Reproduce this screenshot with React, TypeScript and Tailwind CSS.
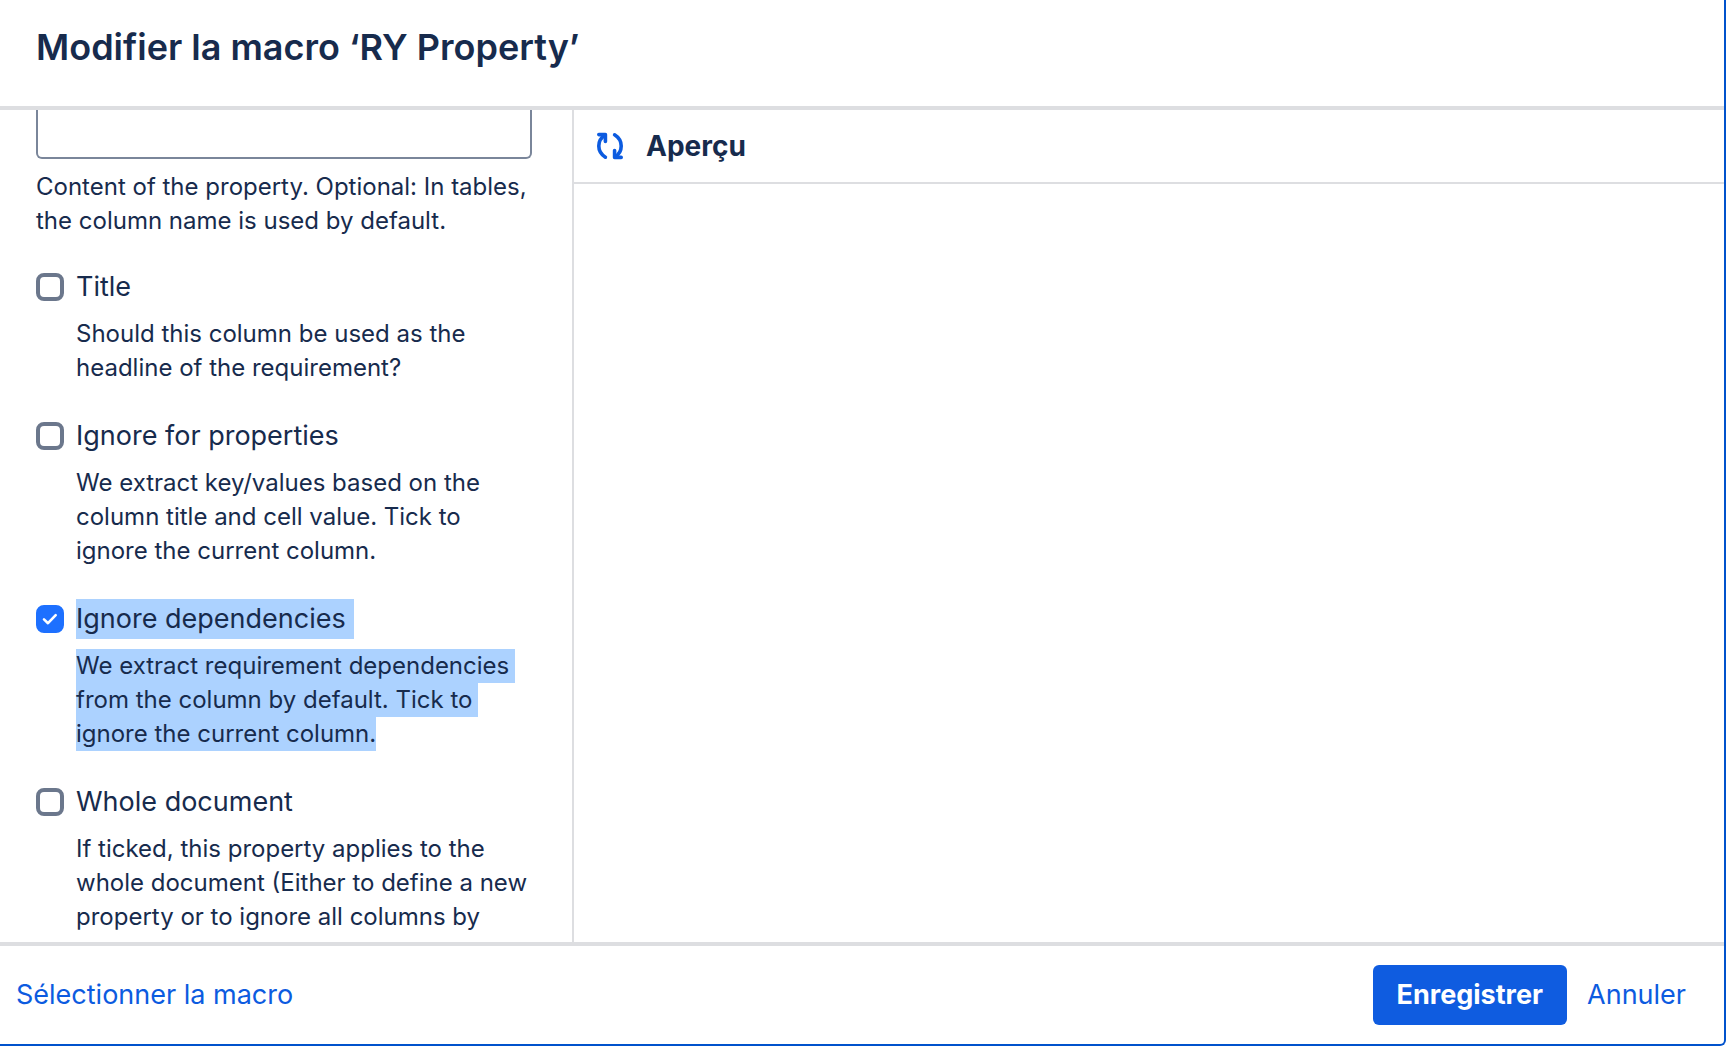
import React from "react";

type Option = {
  id: string;
  label: string;
  lines: string[];
  checked?: boolean;
  selected?: boolean;
};

const options: Option[] = [
  {
    id: "title",
    label: "Title",
    lines: ["Should this column be used as the", "headline of the requirement?"],
  },
  {
    id: "ignore-properties",
    label: "Ignore for properties",
    lines: [
      "We extract key/values based on the",
      "column title and cell value. Tick to",
      "ignore the current column.",
    ],
  },
  {
    id: "ignore-dependencies",
    label: "Ignore dependencies",
    lines: [
      "We extract requirement dependencies",
      "from the column by default. Tick to",
      "ignore the current column.",
    ],
    checked: true,
    selected: true,
  },
  {
    id: "whole-document",
    label: "Whole document",
    lines: [
      "If ticked, this property applies to the",
      "whole document (Either to define a new",
      "property or to ignore all columns by",
    ],
  },
];

function RefreshIcon() {
  return (
    <svg
      viewBox="0 0 28 28"
      className="h-7 w-7"
      fill="none"
      stroke="currentColor"
      strokeWidth="3.6"
      strokeLinecap="round"
      strokeLinejoin="round"
      aria-hidden="true"
    >
      <path d="M9.4 25.2C5 22.4 2.8 18.4 2.8 14C2.8 9.6 5 5.6 9 3" />
      <path d="M2.8 2.6H9.4V9.4" />
      <path d="M18.6 2.8C23 5.6 25.2 9.6 25.2 14C25.2 18.4 23 22.4 19 25" />
      <path d="M25.2 25.4H18.6V18.6" />
    </svg>
  );
}

function OptionField({ option }: { option: Option }) {
  return (
    <div className="flex gap-3">
      <div className="relative mt-[6px] h-7 w-7 shrink-0">
        <input
          id={option.id}
          type="checkbox"
          defaultChecked={option.checked}
          aria-describedby={option.id + "-help"}
          className="peer block h-7 w-7 appearance-none rounded-lg border-4 border-[#6b778c] bg-white checked:border-[#1d70ff] checked:bg-[#1d70ff]"
        />
        <svg
          viewBox="0 0 28 28"
          className="pointer-events-none absolute inset-0 hidden h-7 w-7 peer-checked:block"
          fill="none"
          stroke="white"
          strokeWidth="2.6"
          strokeLinecap="round"
          strokeLinejoin="round"
          aria-hidden="true"
        >
          <path d="M8 14.4L12 18.2L19.7 10.2" />
        </svg>
      </div>
      <div className="min-w-0 whitespace-nowrap">
        <label
          htmlFor={option.id}
          className={
            option.selected
              ? "block w-fit bg-[#acd2ff] pr-2 text-[27px] leading-10"
              : "block w-fit text-[27px] leading-10"
          }
        >
          {option.label}
        </label>
        <p id={option.id + "-help"} className="mt-[10px] text-[24px] leading-[34px]">
          {option.lines.map((line, i) => (
            <span
              key={line}
              className={
                option.selected
                  ? i < option.lines.length - 1
                    ? "block w-fit bg-[#acd2ff] pr-[6px]"
                    : "block w-fit bg-[#acd2ff]"
                  : "block w-fit"
              }
            >
              {line}
            </span>
          ))}
        </p>
      </div>
    </div>
  );
}

export default function App() {
  return (
    <div className="flex h-screen flex-col overflow-hidden rounded-br-md border-r-2 border-b-2 border-[#0052cc] bg-white font-['Inter',sans-serif] text-[#172b4d]">
      <header className="h-[110px] shrink-0 border-b-4 border-[#dddee1] px-9 pt-[23px]">
        <h1 className="text-[36px] leading-[48px] font-semibold">Modifier la macro ‘RY Property’</h1>
      </header>

      <main className="flex min-h-0 flex-1">
        <section className="w-[574px] shrink-0 overflow-hidden border-r-2 border-[#dddee1] pr-10 pl-9">
          <textarea
            aria-label="Content"
            aria-describedby="content-help"
            className="block h-[49px] w-full resize-none rounded-b-md border-2 border-t-0 border-[#7a869a] bg-white outline-none"
          />
          <p id="content-help" className="mt-[11px] text-[24px] leading-[34px] whitespace-nowrap">
            Content of the property. Optional: In tables,
            <br />
            the column name is used by default.
          </p>
          <div className="mt-[29px] flex flex-col gap-[31px]">
            {options.map((option) => (
              <OptionField key={option.id} option={option} />
            ))}
          </div>
        </section>

        <section className="min-w-0 flex-1">
          <div className="flex h-[74px] items-center gap-[22px] border-b-2 border-[#dddee1] px-[22px]">
            <button type="button" aria-label="Actualiser" className="text-[#0c5be0]">
              <RefreshIcon />
            </button>
            <h2 className="text-[28px] leading-10 font-bold">Aperçu</h2>
          </div>
        </section>
      </main>

      <footer className="flex h-[102px] shrink-0 items-center justify-between border-t-4 border-[#dddee1] pr-[38px] pl-4 text-[27px] leading-10 text-[#0c5be0]">
        <a href="#macros">Sélectionner la macro</a>
        <div className="flex items-center gap-5">
          <button
            type="button"
            className="h-[60px] rounded-md bg-[#0f5ce0] px-6 font-bold text-white"
          >
            Enregistrer
          </button>
          <button type="button">Annuler</button>
        </div>
      </footer>
    </div>
  );
}
